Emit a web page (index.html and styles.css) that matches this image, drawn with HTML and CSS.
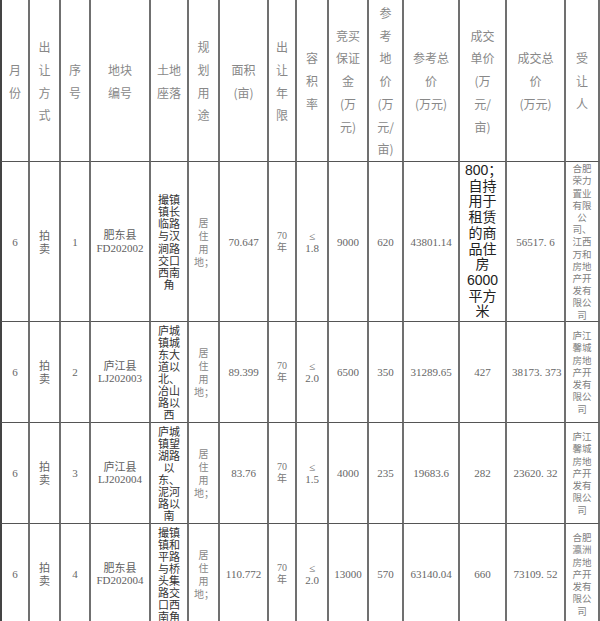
FILE: index.html
```html
<!DOCTYPE html>
<html lang="zh-CN">
<head>
<meta charset="utf-8">
<title>土地出让结果</title>
<link rel="stylesheet" href="styles.css">
</head>
<body>
<table class="land">
  <tr class="head">
    <th>月<br>份</th>
    <th>出<br>让<br>方<br>式</th>
    <th>序<br>号</th>
    <th>地块<br>编号</th>
    <th>土地<br>座落</th>
    <th>规<br>划<br>用<br>途</th>
    <th>面积<br>(亩)</th>
    <th>出<br>让<br>年<br>限</th>
    <th>容<br>积<br>率</th>
    <th>竞买<br>保证<br>金<br>(万<br>元)</th>
    <th>参<br>考<br>地<br>价<br>(万<br>元/<br>亩)</th>
    <th>参考总<br>价<br>(万元)</th>
    <th>成交<br>单价<br>(万<br>元/<br>亩)</th>
    <th>成交总<br>价<br>(万元)</th>
    <th>受<br>让<br>人</th>
  </tr>
  <tr class="r1">
    <td class="num">6</td>
    <td class="cn">拍卖</td>
    <td class="num">1</td>
    <td class="code">肥东县FD202002</td>
    <td class="loc">撮镇镇长临路与汉涧路交口西南角</td>
    <td class="use">居住用地；</td>
    <td class="num">70.647</td>
    <td class="term">70<br>年</td>
    <td class="num">≤<br>1.8</td>
    <td class="num">9000</td>
    <td class="num">620</td>
    <td class="num">43801.14</td>
    <td class="big">800；自持用于租赁的商品住房6000平方米</td>
    <td class="num">56517. 6</td>
    <td class="buyer">合肥荣力置业有限公司、江西万和房地产开发有限公司</td>
  </tr>
  <tr class="r2">
    <td class="num">6</td>
    <td class="cn">拍卖</td>
    <td class="num">2</td>
    <td class="code">庐江县LJ202003</td>
    <td class="loc">庐城镇城东大道以北、冶山路以西</td>
    <td class="use">居住用地；</td>
    <td class="num">89.399</td>
    <td class="term">70<br>年</td>
    <td class="num">≤<br>2.0</td>
    <td class="num">6500</td>
    <td class="num">350</td>
    <td class="num">31289.65</td>
    <td class="num">427</td>
    <td class="num">38173. 373</td>
    <td class="buyer">庐江馨城房地产开发有限公司</td>
  </tr>
  <tr class="r3">
    <td class="num">6</td>
    <td class="cn">拍卖</td>
    <td class="num">3</td>
    <td class="code">庐江县LJ202004</td>
    <td class="loc">庐城镇望湖路以东、泥河路以南</td>
    <td class="use">居住用地；</td>
    <td class="num">83.76</td>
    <td class="term">70<br>年</td>
    <td class="num">≤<br>1.5</td>
    <td class="num">4000</td>
    <td class="num">235</td>
    <td class="num">19683.6</td>
    <td class="num">282</td>
    <td class="num">23620. 32</td>
    <td class="buyer">庐江馨城房地产开发有限公司</td>
  </tr>
  <tr class="r4">
    <td class="num">6</td>
    <td class="cn">拍卖</td>
    <td class="num">4</td>
    <td class="code">肥东县FD202004</td>
    <td class="loc">撮镇镇和平路与桥头集路交口西南角</td>
    <td class="use">居住用地；</td>
    <td class="num">110.772</td>
    <td class="term">70<br>年</td>
    <td class="num">≤<br>2.0</td>
    <td class="num">13000</td>
    <td class="num">570</td>
    <td class="num">63140.04</td>
    <td class="num">660</td>
    <td class="num">73109. 52</td>
    <td class="buyer">合肥瀛洲房地产开发有限公司</td>
  </tr>
</table>
</body>
</html>
```

FILE: styles.css
```css
html, body {
  margin: 0;
  padding: 0;
  background: #ffffff;
}

body {
  font-family: "Liberation Serif", "Noto Sans CJK SC", serif;
  color: #666666;
}

.land {
  width: 600px;
  table-layout: fixed;
  border-collapse: separate;
  border-spacing: 0;
}

.land th,
.land td {
  box-sizing: border-box;
  border-right: 2px solid #707070;
  border-bottom: 1px solid #555555;
  padding: 0 5px;
  text-align: center;
  vertical-align: middle;
}

.land th:first-child,
.land td:first-child {
  border-left: 2px solid #444444;
  padding: 0;
}

.land .head th {
  height: 162px;
  padding: 2px 0 0;
  font-family: "Noto Sans CJK SC", sans-serif;
  font-weight: normal;
  font-size: 12px;
  line-height: 22.7px;
  color: #888888;
}

.head th:nth-child(1) { width: 30px; }
.head th:nth-child(2) { width: 31px; }
.head th:nth-child(3) { width: 30px; }
.head th:nth-child(4) { width: 60px; }
.head th:nth-child(5) { width: 38px; }
.head th:nth-child(6) { width: 31px; }
.head th:nth-child(7) { width: 49px; }
.head th:nth-child(8) { width: 28px; }
.head th:nth-child(9) { width: 32px; }
.head th:nth-child(10) { width: 40px; }
.head th:nth-child(11) { width: 35px; }
.head th:nth-child(12) { width: 56px; }
.head th:nth-child(13) { width: 47px; }
.head th:nth-child(14) { width: 59px; }
.head th:nth-child(15) { width: 34px; }

.r1 td { height: 160px; }
.r2 td,
.r3 td,
.r4 td { height: 101px; }

.num {
  font-family: "Liberation Serif", serif;
  font-size: 11px;
  line-height: 12px;
  color: #666666;
  white-space: nowrap;
}

.cn {
  font-family: "Noto Sans CJK SC", sans-serif;
  font-size: 11px;
  line-height: 13px;
  color: #666666;
}

.code {
  font-size: 11px;
  line-height: 12.5px;
  color: #606060;
}

.loc {
  font-family: "Noto Sans CJK SC", sans-serif;
  font-size: 11px;
  line-height: 12.1px;
  color: #333333;
}

.use {
  font-family: "Noto Sans CJK SC", sans-serif;
  font-size: 10px;
  line-height: 13px;
  color: #888888;
}

.term {
  font-size: 10px;
  line-height: 12px;
  color: #777777;
}

.big {
  font-family: "Liberation Sans", "Noto Sans CJK SC", sans-serif;
  font-size: 14px;
  line-height: 15.7px;
  color: #222222;
}

.land td.buyer {
  padding: 0 4px;
  font-family: "Noto Sans CJK SC", sans-serif;
  font-size: 9.5px;
  line-height: 12.2px;
  color: #808080;
}
```
